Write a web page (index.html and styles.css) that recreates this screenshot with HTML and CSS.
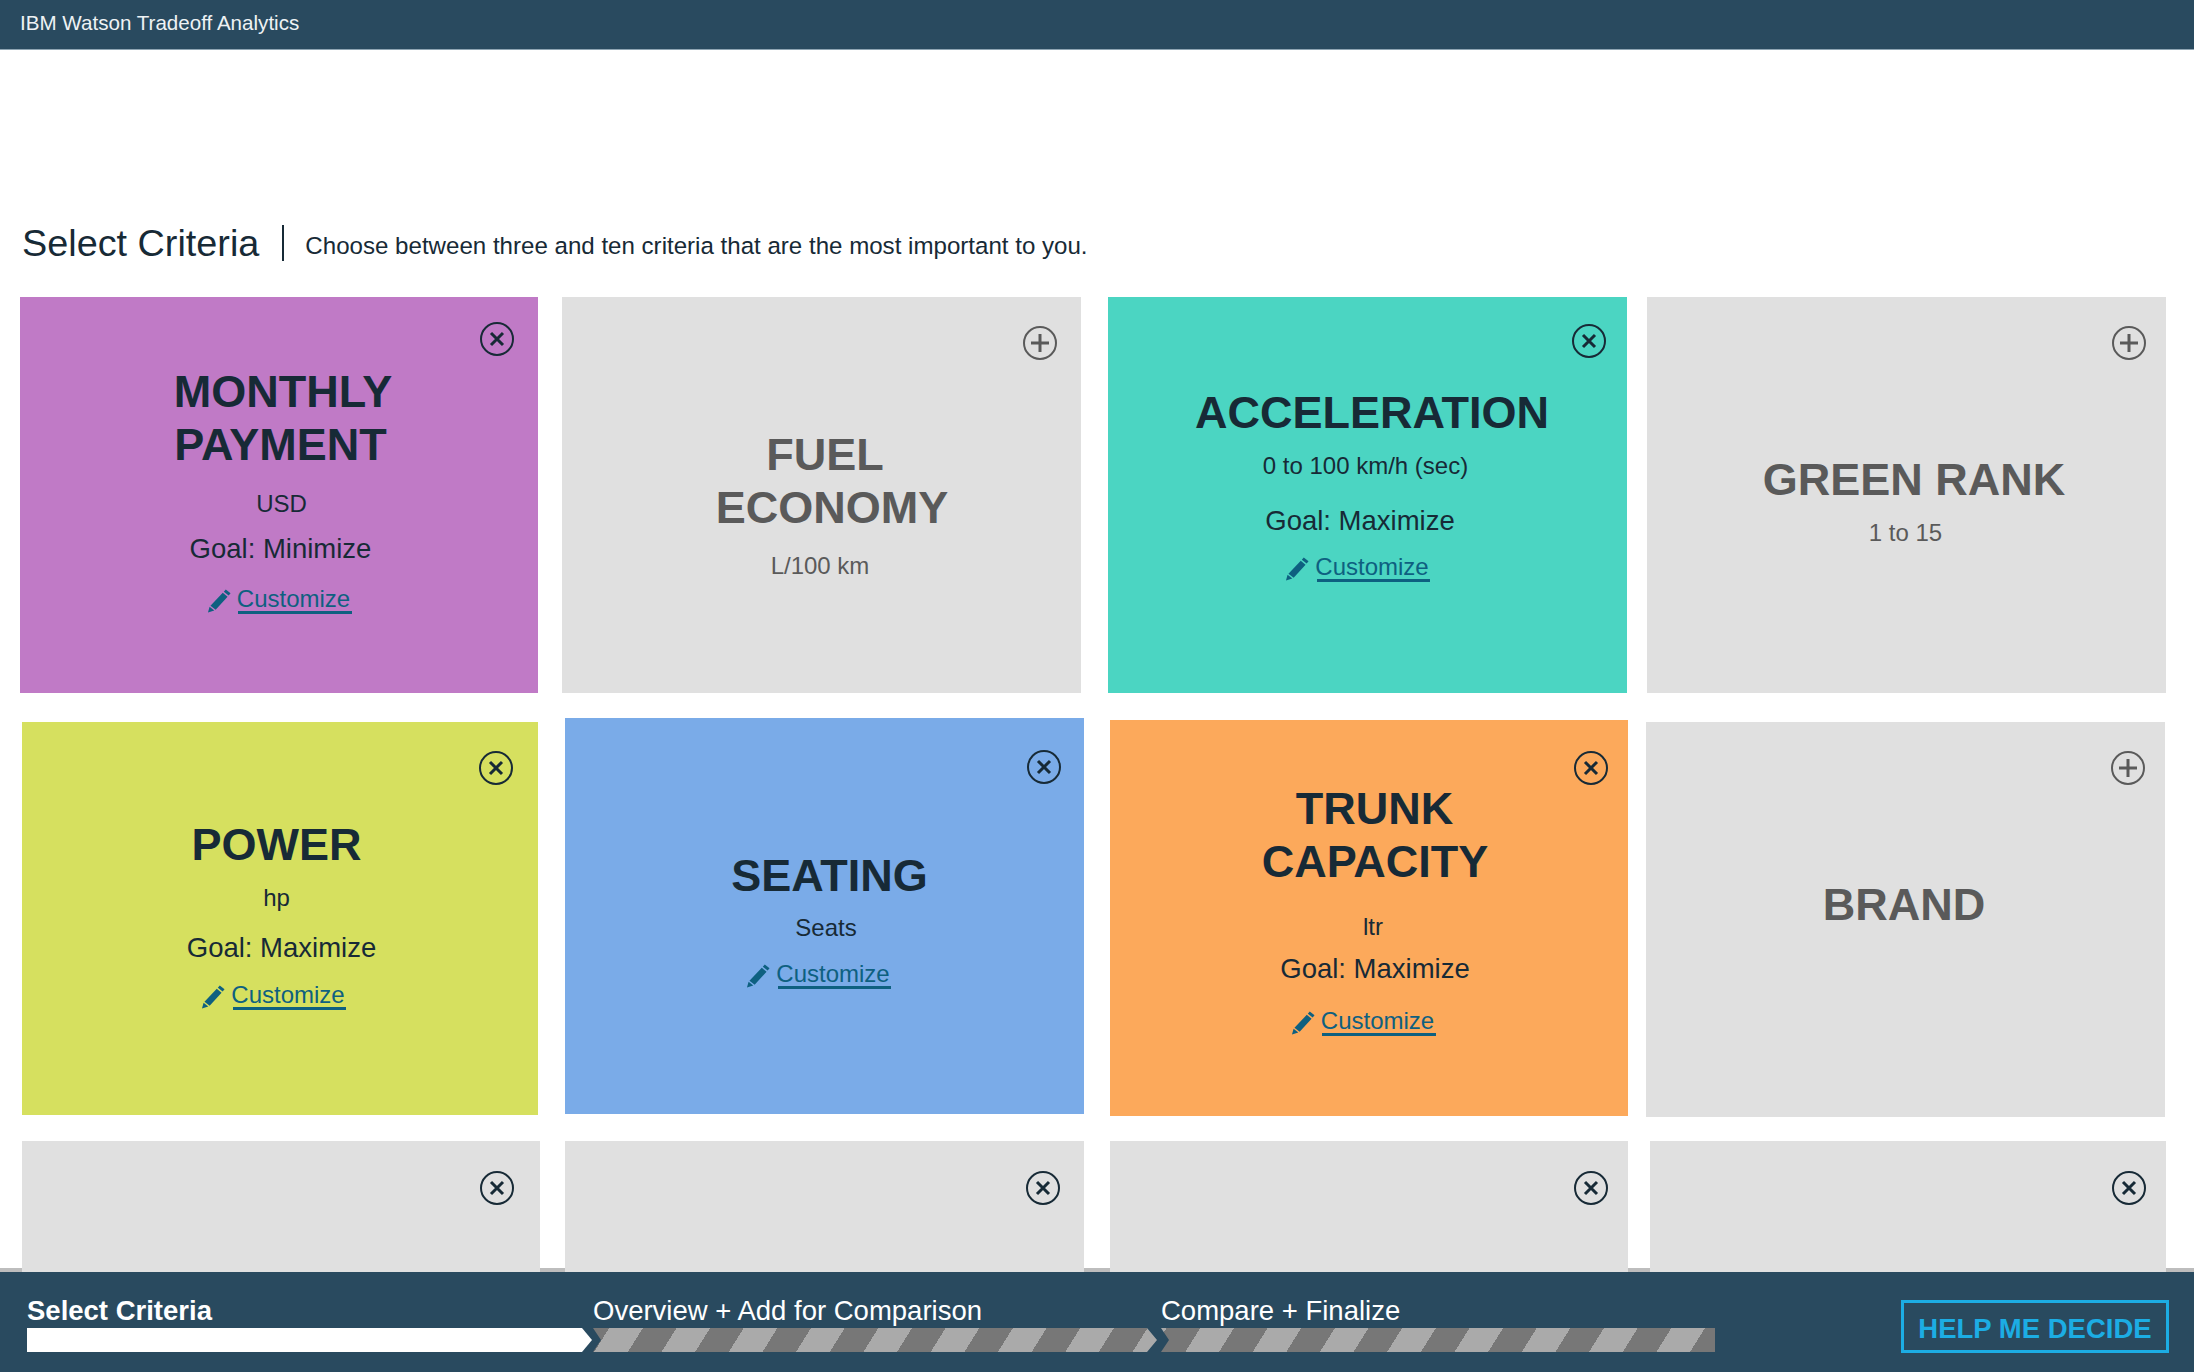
FILE: index.html
```html
<!DOCTYPE html>
<html lang="en">
<head>
<meta charset="utf-8">
<title>IBM Watson Tradeoff Analytics</title>
<link rel="stylesheet" href="styles.css">
</head>
<body>
<svg class="defs" aria-hidden="true">
  <symbol id="pencil" viewBox="0 0 26 26">
    <path d="M19.5 1.5l5 4-2 2.4-5-4zM16.4 5l5 4L9 22.6l-5.4-4.2zM2.7 19.6l4.9 3.9-6.6 2z"/>
  </symbol>
  <symbol id="close" viewBox="0 0 34 34">
    <circle cx="17" cy="17" r="16" fill="none" stroke="currentColor" stroke-width="2"/>
    <path d="M11 11l12 12M23 11l-12 12" fill="none" stroke="currentColor" stroke-width="3"/>
  </symbol>
  <symbol id="add" viewBox="0 0 34 34">
    <circle cx="17" cy="17" r="16" fill="none" stroke="currentColor" stroke-width="2"/>
    <path d="M8 17h18M17 8v18" fill="none" stroke="currentColor" stroke-width="3"/>
  </symbol>
</svg>
<header class="topbar">IBM Watson Tradeoff Analytics</header>
<main class="page">
  <div class="heading">
    <h1 class="heading-title">Select Criteria</h1>
    <span class="heading-divider"></span>
    <p class="heading-note">Choose between three and ten criteria that are the most important to you.</p>
  </div>

  <div class="row row-1">
    <section class="card purple c1">
      <svg class="icon"><use href="#close"/></svg>
      <h2 class="title"><span class="t1">MONTHLY</span><span class="t2">PAYMENT</span></h2>
      <p class="unit">USD</p>
      <p class="goal">Goal: Minimize</p>
      <a class="custom" href="#"><svg class="pencil"><use href="#pencil"/></svg><span class="custom-text">Customize</span></a>
    </section>
    <section class="card off c2">
      <svg class="icon"><use href="#add"/></svg>
      <h2 class="title"><span class="t1">FUEL</span><span class="t2">ECONOMY</span></h2>
      <p class="unit">L/100 km</p>
    </section>
    <section class="card teal c3">
      <svg class="icon"><use href="#close"/></svg>
      <h2 class="title"><span class="t1">ACCELERATION</span></h2>
      <p class="unit">0 to 100 km/h (sec)</p>
      <p class="goal">Goal: Maximize</p>
      <a class="custom" href="#"><svg class="pencil"><use href="#pencil"/></svg><span class="custom-text">Customize</span></a>
    </section>
    <section class="card off c4">
      <svg class="icon"><use href="#add"/></svg>
      <h2 class="title"><span class="t1">GREEN RANK</span></h2>
      <p class="unit">1 to 15</p>
    </section>
  </div>

  <div class="row row-2">
    <section class="card lime c5">
      <svg class="icon"><use href="#close"/></svg>
      <h2 class="title"><span class="t1">POWER</span></h2>
      <p class="unit">hp</p>
      <p class="goal">Goal: Maximize</p>
      <a class="custom" href="#"><svg class="pencil"><use href="#pencil"/></svg><span class="custom-text">Customize</span></a>
    </section>
    <section class="card blue c6">
      <svg class="icon"><use href="#close"/></svg>
      <h2 class="title"><span class="t1">SEATING</span></h2>
      <p class="unit">Seats</p>
      <a class="custom" href="#"><svg class="pencil"><use href="#pencil"/></svg><span class="custom-text">Customize</span></a>
    </section>
    <section class="card orange c7">
      <svg class="icon"><use href="#close"/></svg>
      <h2 class="title"><span class="t1">TRUNK</span><span class="t2">CAPACITY</span></h2>
      <p class="unit">ltr</p>
      <p class="goal">Goal: Maximize</p>
      <a class="custom" href="#"><svg class="pencil"><use href="#pencil"/></svg><span class="custom-text">Customize</span></a>
    </section>
    <section class="card off c8">
      <svg class="icon"><use href="#add"/></svg>
      <h2 class="title"><span class="t1">BRAND</span></h2>
    </section>
  </div>

  <div class="row row-3">
    <section class="card empty c9"><svg class="icon"><use href="#close"/></svg></section>
    <section class="card empty c10"><svg class="icon"><use href="#close"/></svg></section>
    <section class="card empty c11"><svg class="icon"><use href="#close"/></svg></section>
    <section class="card empty c12"><svg class="icon"><use href="#close"/></svg></section>
  </div>
</main>
<footer class="footer">
  <ol class="steps">
    <li class="step step-active">
      <span class="step-label">Select Criteria</span>
      <span class="bar bar-white"></span>
    </li>
    <li class="step step-mid">
      <span class="step-label">Overview + Add for Comparison</span>
      <span class="bar bar-stripe"></span>
    </li>
    <li class="step step-last">
      <span class="step-label">Compare + Finalize</span>
      <span class="bar bar-stripe bar-end"></span>
    </li>
  </ol>
  <button class="help" type="button">HELP ME DECIDE</button>
</footer>
</body>
</html>
```

FILE: styles.css
```css
* { box-sizing: border-box; }
html, body { margin: 0; padding: 0; }
body {
  width: 2194px;
  height: 1372px;
  overflow: hidden;
  display: flex;
  flex-direction: column;
  background: #fff;
  font-family: "Liberation Sans", Arial, sans-serif;
  color: #172a36;
}
.defs { display: none; }

.topbar {
  flex: none;
  height: 50px;
  padding: 11px 0 0 20px;
  background: #294a5f;
  border-bottom: 1px solid #8ea5b3;
  color: #eef2f4;
  font-size: 20.6px;
  line-height: 24px;
}

.page {
  flex: none;
  height: 1222px;
  overflow: hidden;
  background: linear-gradient(#bdbdbd, #bdbdbd) left bottom / 100% 4px no-repeat;
}

.heading {
  display: flex;
  align-items: center;
  height: 36px;
  margin: 175px 0 0 22px;
}
.heading-title {
  margin: 0;
  font-size: 37.8px;
  font-weight: 400;
  line-height: 36px;
}
.heading-divider {
  flex: none;
  width: 2px;
  height: 36px;
  margin: 0 21px 0 23px;
  background: #172a36;
}
.heading-note {
  margin: 6px 0 0;
  font-size: 24.1px;
  line-height: 30px;
}

.row { display: flex; align-items: flex-start; }
.row-1 { margin-top: 36px; padding-left: 20px; }
.row-2 { margin-top: 29px; padding-left: 22px; }
.row-3 { margin-top: 24px; padding-left: 22px; }

.card {
  position: relative;
  flex: none;
  width: 519px;
  display: flex;
  flex-direction: column;
  align-items: center;
  text-align: center;
}
.purple { background: #c07ac6; }
.teal { background: #4bd5c2; }
.lime { background: #d6e05f; }
.blue { background: #7aabe8; }
.orange { background: #fca95b; }
.off, .empty { background: #e0e0e0; }
.off { color: #5a5a5a; }

.icon {
  position: absolute;
  right: 24px;
  top: 26px;
  width: 34px;
  height: 34px;
  color: #172a36;
}
.off .icon { color: #5a5a5a; }

.title { margin: 0; font-size: 45px; font-weight: 700; line-height: 52px; }
.title span { display: block; white-space: nowrap; }
.unit { margin: 0; font-size: 24px; line-height: 30px; }
.goal { margin: 0; font-size: 27.5px; line-height: 34px; white-space: nowrap; }
.custom {
  display: flex;
  align-items: center;
  height: 30px;
  color: #0e6080;
  font-size: 24px;
  line-height: 30px;
  text-decoration: none;
}
.pencil { flex: none; width: 25px; height: 25px; margin: 3px 5px 0 0; fill: #0e6080; }
.custom-text { position: relative; display: block; }
.custom-text::after {
  content: "";
  position: absolute;
  left: 1.5px;
  right: -1.5px;
  top: 27px;
  height: 2.5px;
  background: #0e6080;
}

/* Row 1 */
.c1 { width: 518px; height: 396px; padding-top: 69px; }
.c1 .icon { top: 25px; right: 24px; }
.c1 .t1 { margin-left: 8px; }
.c1 .t2 { margin: 1px 0 0 3px; }
.c1 .unit { margin: 18px 0 0 5px; }
.c1 .goal { margin: 13px 0 0 3px; }
.c1 .custom { margin: 18px 0 0 -1px; }

.c2 { height: 396px; margin-left: 24px; padding-top: 132px; }
.c2 .icon { right: 24px; top: 29px; }
.c2 .t1 { margin-left: 7px; }
.c2 .t2 { margin: 1px 0 0 21px; }
.c2 .unit { margin: 17px 0 0 -3px; }

.c3 { height: 396px; margin-left: 27px; padding-top: 90px; }
.c3 .icon { right: 21px; top: 27px; }
.c3 .t1 { margin-left: 9px; }
.c3 .unit { margin: 12px 0 0 -4px; }
.c3 .goal { margin: 23px 0 0 -15px; }
.c3 .custom { margin: 14px 0 0 -21px; }

.c4 { height: 396px; margin-left: 20px; padding-top: 157px; }
.c4 .icon { right: 20px; top: 29px; }
.c4 .t1 { margin-left: 15px; }
.c4 .unit { margin: 12px 0 0 -2px; }

/* Row 2 */
.c5 { width: 516px; height: 393px; padding-top: 97px; }
.c5 .icon { right: 25px; top: 29px; }
.c5 .t1 { margin-left: -7px; }
.c5 .unit { margin: 12px 0 0 -7px; }
.c5 .goal { margin: 18px 0 0 3px; }
.c5 .custom { margin: 15px 0 0 -14px; }

.c6 { height: 396px; margin: -4px 0 0 27px; padding-top: 132px; }
.c6 .icon { right: 23px; top: 32px; }
.c6 .t1 { margin-left: 10px; }
.c6 .unit { margin: 11px 0 0 3px; }
.c6 .custom { margin: 16px 0 0 -13px; }

.c7 { width: 518px; height: 396px; margin: -2px 0 0 26px; padding-top: 63px; }
.c7 .icon { right: 20px; top: 31px; }
.c7 .t1 { margin-left: 11px; }
.c7 .t2 { margin: 1px 0 0 12px; }
.c7 .unit { margin: 24px 0 0 8px; }
.c7 .goal { margin: 10px 0 0 12px; }
.c7 .custom { margin: 20px 0 0 -13px; }

.c8 { height: 395px; margin-left: 18px; padding-top: 157px; }
.c8 .icon { right: 20px; top: 29px; }
.c8 .t1 { margin-left: -3px; }

/* Row 3 */
.empty { height: 140px; }
.empty .icon { top: 30px; }
.c9 { width: 518px; }
.c9 .icon { right: 26px; }
.c10 { margin-left: 25px; }
.c10 .icon { right: 24px; }
.c11 { width: 518px; margin-left: 26px; }
.c11 .icon { right: 20px; }
.c12 { width: 516px; margin-left: 22px; }
.c12 .icon { right: 20px; }

/* Footer */
.footer {
  flex: none;
  height: 100px;
  display: flex;
  align-items: flex-start;
  padding: 0 25px 0 27px;
  background: #294a5f;
  color: #fff;
}
.steps {
  display: flex;
  list-style: none;
  margin: 0;
  padding: 0;
}
.step {
  display: flex;
  flex-direction: column;
  width: 566px;
  padding-top: 23px;
}
.step-mid { width: 568px; }
.step-last { width: 554px; }
.step-label { height: 33px; font-size: 27.5px; line-height: 32px; white-space: nowrap; }
.step-active .step-label { font-weight: 700; }
.bar { display: block; height: 24px; width: 565px; }
.bar-white {
  background: #fff;
  clip-path: polygon(0 0, 555px 0, 565px 12px, 555px 24px, 0 24px);
}
.bar-stripe {
  background: repeating-linear-gradient(122deg, #777 -14.8px, #777 13.7px, #aaa 13.7px, #aaa 42.27px);
  clip-path: polygon(0 0, 554px 0, 564px 12px, 554px 24px, 0 24px, 8px 12px);
}
.bar-end {
  width: 554px;
  background: repeating-linear-gradient(122deg, #777 4.8px, #777 33.3px, #aaa 33.3px, #aaa 61.87px);
  clip-path: polygon(0 0, 100% 0, 100% 100%, 0 100%, 8px 12px);
}
.help {
  margin: 28px 0 0 auto;
  width: 268px;
  height: 53px;
  padding: 4px 0 0;
  border: 3px solid #1cade4;
  background: none;
  color: #1cade4;
  font-family: inherit;
  font-size: 27.5px;
  font-weight: 700;
  line-height: 43px;
}
```
